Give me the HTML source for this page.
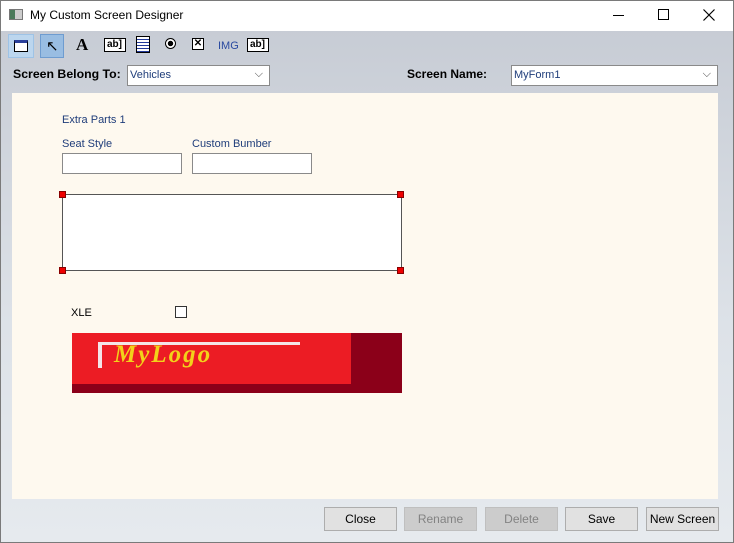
<!DOCTYPE html>
<html><head><style>
*{margin:0;padding:0;box-sizing:border-box}
body{width:734px;height:543px;overflow:hidden;font-family:"Liberation Sans",sans-serif;font-size:11px;position:relative;background:#fff}
.win{position:absolute;left:0;top:0;width:734px;height:543px;background:linear-gradient(#c5cad3,#dde2e8 60%,#e6eaee)}
.bord{position:absolute;left:0;top:0;width:734px;height:543px;border:1px solid #7a7a7a;z-index:5}
.title{position:absolute;left:0;top:0;width:734px;height:31px;background:#fff}
.a{position:absolute}
.lbl{color:#1f3d7a;font-size:11px}
.inp{position:absolute;background:#fff;border:1px solid #8a8a8a}
.btn{position:absolute;top:507px;height:24px;width:73px;border:1px solid #adadad;background:#e1e1e1;text-align:center;line-height:22px;font-size:12px;color:#000}
.dis{background:#cccccc;color:#838383;border-color:#bfbfbf}
.h{position:absolute;width:7px;height:7px;background:#e00;border:1px solid #800}
</style></head><body>
<div class="win">
<div class="title">
 <div class="a" style="left:9px;top:9px;width:14px;height:11px;border:1px solid #777;background:linear-gradient(90deg,#4a7a5a 40%,#ccc 40%)"></div>
 <div class="a" style="left:30px;top:8px;font-size:12px;color:#000">My Custom Screen Designer</div>
 <div class="a" style="left:613px;top:15px;width:11px;height:1px;background:#000"></div>
 <div class="a" style="left:658px;top:9px;width:11px;height:11px;border:1px solid #000"></div>
 <svg class="a" style="left:703px;top:9px" width="12" height="12"><path d="M0.5 0.5L11.5 11.5M11.5 0.5L0.5 11.5" stroke="#000" stroke-width="1.2"/></svg>
</div>
<!-- toolbar -->
<div class="a" style="left:8px;top:34px;width:26px;height:24px;background:#bcd6ee;border:1px solid #9ec3e6"></div>
<div class="a" style="left:14px;top:40px;width:14px;height:12px;border:1px solid #000;background:#fff;border-top:3px solid #2a3f9a"></div>
<div class="a" style="left:40px;top:34px;width:24px;height:24px;background:#99bde2;border:1px solid #6e9cd0"></div>
<div class="a" style="left:46px;top:37px;font-size:15px">↖</div>
<div class="a" style="left:76px;top:35px;font-size:17px;font-weight:bold;font-family:'Liberation Serif',serif">A</div>
<div class="a" style="left:104px;top:38px;width:22px;height:14px;border:1px solid #000;background:#fff;font-size:10px;font-weight:bold;line-height:12px;padding-left:2px">ab]</div>
<div class="a" style="left:136px;top:36px;width:14px;height:17px;border:1px solid #000;background:repeating-linear-gradient(#fff 0 2px,#233a9a 2px 3px)"></div>
<div class="a" style="left:165px;top:38px;width:11px;height:11px;border-radius:50%;border:1px solid #000;background:radial-gradient(#000 40%,#fff 45%)"></div>
<div class="a" style="left:192px;top:38px;width:12px;height:12px;border:1px solid #000;background:#fff;font-size:10px;line-height:10px;text-align:center;font-weight:bold">✕</div>
<div class="a" style="left:218px;top:40px;font-size:11px;color:#2a4aa0">IMG</div>
<div class="a" style="left:247px;top:38px;width:22px;height:14px;border:1px solid #000;background:#fff;font-size:10px;font-weight:bold;line-height:12px;padding-left:2px">ab]</div>
<!-- row -->
<div class="a" style="left:13px;top:67px;font-size:12.3px;font-weight:bold;color:#000">Screen Belong To:</div>
<div class="inp" style="left:127px;top:65px;width:143px;height:21px;color:#1f3d7a;padding:3px 2px;font-size:11px">Vehicles<span style="position:absolute;right:6px;top:2px;color:#444">⌵</span></div>
<div class="a" style="left:407px;top:67px;font-size:12px;font-weight:bold;color:#000">Screen Name:</div>
<div class="inp" style="left:511px;top:65px;width:207px;height:21px;color:#1f3d7a;padding:3px 2px;font-size:11px">MyForm1<span style="position:absolute;right:6px;top:2px;color:#444">⌵</span></div>
<!-- panel -->
<div class="a" style="left:12px;top:93px;width:706px;height:406px;background:#fef9ef">
 <div class="a lbl" style="left:50px;top:21px">Extra Parts 1</div>
 <div class="a lbl" style="left:50px;top:45px">Seat Style</div>
 <div class="a lbl" style="left:180px;top:45px">Custom Bumber</div>
 <div class="inp" style="left:50px;top:60px;width:120px;height:21px"></div>
 <div class="inp" style="left:180px;top:60px;width:120px;height:21px"></div>
 <div class="inp" style="left:50px;top:101px;width:340px;height:77px;border-color:#555"></div>
 <div class="h" style="left:47px;top:98px"></div><div class="h" style="left:385px;top:98px"></div>
 <div class="h" style="left:47px;top:174px"></div><div class="h" style="left:385px;top:174px"></div>
 <div class="a" style="left:59px;top:214px;font-size:11px;color:#000">XLE</div>
 <div class="a" style="left:163px;top:213px;width:12px;height:12px;border:1px solid #333;background:#fff"></div>
 <div class="a" style="left:60px;top:240px;width:330px;height:60px;background:#8b0019">
  <div class="a" style="left:0;top:0;width:279px;height:51px;background:#ec1c24"></div>
  <div class="a" style="left:26px;top:9px;width:202px;height:3px;background:#f4e4e8"></div>
  <div class="a" style="left:26px;top:9px;width:4px;height:26px;background:#f4e4e8"></div>
  <div class="a" style="left:42px;top:8px;font-family:'Liberation Serif',serif;font-style:italic;font-weight:bold;font-size:25px;color:#f2d21a;letter-spacing:2px">MyLogo</div>
 </div>
</div>
<div class="btn" style="left:324px">Close</div>
<div class="btn dis" style="left:404px">Rename</div>
<div class="btn dis" style="left:485px">Delete</div>
<div class="btn" style="left:565px">Save</div>
<div class="btn" style="left:646px">New Screen</div>
</div>
<div class="bord"></div>
</body></html>
